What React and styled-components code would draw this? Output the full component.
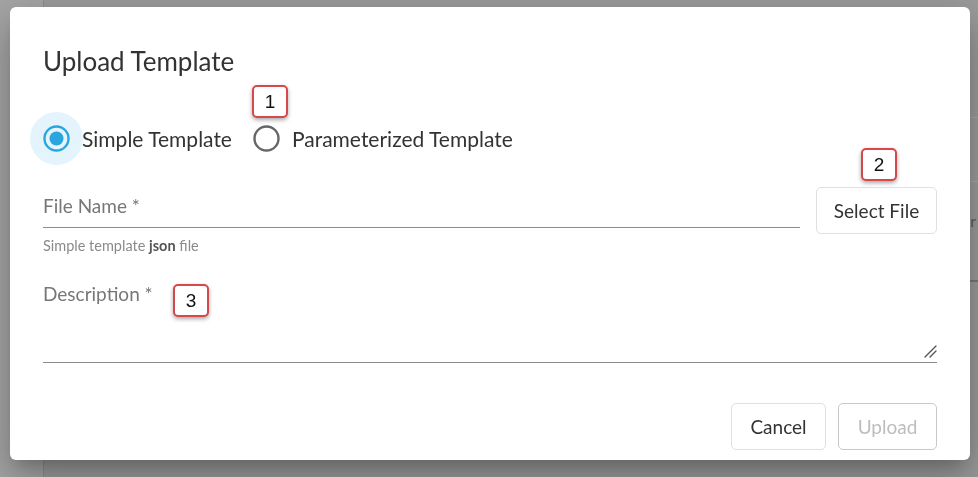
import React from 'react';
import styled, { createGlobalStyle } from 'styled-components';

const GlobalStyle = createGlobalStyle`
  html, body {
    margin: 0;
    padding: 0;
  }

  body {
    width: 978px;
    height: 477px;
    overflow: hidden;
    background: #9b9b9b;
    font-family: 'Lato', 'Open Sans', sans-serif;
  }
`;

const Page = styled.div`
  display: flex;
  width: 978px;
  height: 477px;
`;

const Sidebar = styled.div`
  width: 43px;
  background: #a5a5a5;
  border-right: 1px solid #8e8e8e;
`;

const Main = styled.div`
  flex: 1;
  display: flex;
  flex-direction: column;
  overflow: hidden;
`;

const BgRow = styled.div`
  height: ${(p) => p.$h}px;
  box-sizing: border-box;
  flex-shrink: 0;
  padding-top: ${(p) => p.$pad || 0}px;
  border-bottom: ${(p) => p.$line || 'none'};
  display: flex;
  color: #5c5c5c;
  font-size: 16px;
  line-height: 20px;
  white-space: nowrap;

  span {
    margin-left: auto;
    margin-right: 2px;
  }
`;

const Overlay = styled.div`
  position: fixed;
  inset: 0;
  padding: 7px 0 0 10px;
`;

const Dialog = styled.div`
  position: relative;
  width: 960px;
  height: 453px;
  box-sizing: border-box;
  padding: 38px 33px 11px;
  display: flex;
  flex-direction: column;
  background: #fff;
  border-radius: 6px;
  box-shadow: 0 11px 15px -7px rgba(0, 0, 0, 0.2),
    0 24px 38px 3px rgba(0, 0, 0, 0.14), 0 9px 46px 8px rgba(0, 0, 0, 0.12);
`;

const Title = styled.h2`
  margin: 0;
  font-size: 26px;
  line-height: 32px;
  font-weight: 400;
  color: #333;
`;

const RadioGroup = styled.div`
  display: flex;
  height: 53px;
  margin: 35px 0 0 -13px;
`;

const Option = styled.label`
  display: flex;
  align-items: center;
  margin-right: 8px;
  cursor: pointer;
`;

const Halo = styled.span`
  width: 53px;
  height: 53px;
  border-radius: 50%;
  display: flex;
  align-items: center;
  justify-content: center;
  background: ${(p) => (p.$checked ? '#e4f4fc' : 'transparent')};
`;

const OptionLabel = styled.span`
  margin-left: -1px;
  font-size: 21px;
  color: #333;
`;

const FieldRow = styled.div`
  display: flex;
  align-items: flex-start;
  gap: 16px;
  margin-top: 22px;
`;

const FieldColumn = styled.div`
  flex: 1;
`;

const TextInput = styled.input`
  display: block;
  width: 100%;
  height: 41px;
  box-sizing: border-box;
  padding: 0 0 3px;
  border: none;
  border-bottom: 1px solid #8c8c8c;
  outline: none;
  background: transparent;
  font-family: inherit;
  font-size: 19px;
  color: #333;

  &::placeholder {
    color: #777;
  }
`;

const Helper = styled.div`
  margin-top: 9px;
  font-size: 14.5px;
  line-height: 18px;
  color: #8a8a8a;

  b {
    color: #555;
    font-weight: 700;
  }
`;

const AreaWrap = styled.div`
  position: relative;
  margin-top: 27px;
`;

const TextArea = styled.textarea`
  display: block;
  width: 100%;
  height: 81px;
  box-sizing: border-box;
  padding: 0;
  border: none;
  border-bottom: 1px solid #8c8c8c;
  outline: none;
  resize: none;
  font-family: inherit;
  font-size: 19px;
  line-height: 24px;
  color: #333;

  &::placeholder {
    color: #777;
  }
`;

const Grip = styled.svg`
  position: absolute;
  right: 0;
  bottom: 5px;
  pointer-events: none;
`;

const OutlineButton = styled.button`
  width: ${(p) => p.$w}px;
  height: 47px;
  flex-shrink: 0;
  padding: 0;
  background: #fff;
  border: 1px solid #e0e0e0;
  border-radius: 5px;
  font-family: inherit;
  font-size: 19px;
  color: #333;
  cursor: pointer;

  &:disabled {
    color: #bdbdbd;
    border-color: #c9c9c9;
    cursor: default;
  }
`;

const Footer = styled.div`
  display: flex;
  justify-content: flex-end;
  gap: 12px;
  margin-top: 40px;
`;

const Badge = styled.div`
  position: absolute;
  left: ${(p) => p.$x}px;
  top: ${(p) => p.$y}px;
  width: 36px;
  height: 33px;
  box-sizing: border-box;
  display: flex;
  align-items: center;
  justify-content: center;
  background: #fff;
  border: 2px solid #d8474a;
  border-radius: 5px;
  box-shadow: 0 2px 4px rgba(0, 0, 0, 0.35);
  font-family: 'Liberation Sans', Arial, sans-serif;
  font-size: 19px;
  color: #111;
`;

const RadioIcon = ({ checked }) => (
  <svg width="27" height="27" viewBox="0 0 27 27">
    <circle
      cx="13.5"
      cy="13.5"
      r="12"
      fill="none"
      stroke={checked ? '#2aa6de' : '#666'}
      strokeWidth="2.4"
    />
    {checked && <circle cx="13.5" cy="13.5" r="7" fill="#2aa6de" />}
  </svg>
);

const RadioOption = ({ checked, label }) => (
  <Option>
    <Halo $checked={checked}>
      <RadioIcon checked={checked} />
    </Halo>
    <OptionLabel>{label}</OptionLabel>
  </Option>
);

const App = () => {
  return (
    <>
      <GlobalStyle />
      <Page>
        <Sidebar />
        <Main>
          <BgRow $h={118} $line="1px solid #a8a8a8" />
          <BgRow $h={64} $line="1px solid #a8a8a8" />
          <BgRow $h={100} $pad={29} $line="2px solid #767676">
            <span>Owner</span>
          </BgRow>
        </Main>
      </Page>
      <Overlay>
        <Dialog>
          <Title>Upload Template</Title>
          <RadioGroup>
            <RadioOption checked label="Simple Template" />
            <RadioOption label="Parameterized Template" />
          </RadioGroup>
          <FieldRow>
            <FieldColumn>
              <TextInput placeholder="File Name *" readOnly />
              <Helper>
                Simple template <b>json</b> file
              </Helper>
            </FieldColumn>
            <OutlineButton $w={121}>Select File</OutlineButton>
          </FieldRow>
          <AreaWrap>
            <TextArea placeholder="Description *" />
            <Grip width="13" height="13" viewBox="0 0 13 13">
              <path
                d="M12 1 L1 12 M12 6 L6 12"
                stroke="#555"
                strokeWidth="1.4"
                strokeLinecap="round"
                fill="none"
              />
            </Grip>
          </AreaWrap>
          <Footer>
            <OutlineButton $w={95}>Cancel</OutlineButton>
            <OutlineButton $w={99} disabled>
              Upload
            </OutlineButton>
          </Footer>
          <Badge $x={242} $y={78}>1</Badge>
          <Badge $x={851} $y={141}>2</Badge>
          <Badge $x={163} $y={277}>3</Badge>
        </Dialog>
      </Overlay>
    </>
  );
};

export default App;
